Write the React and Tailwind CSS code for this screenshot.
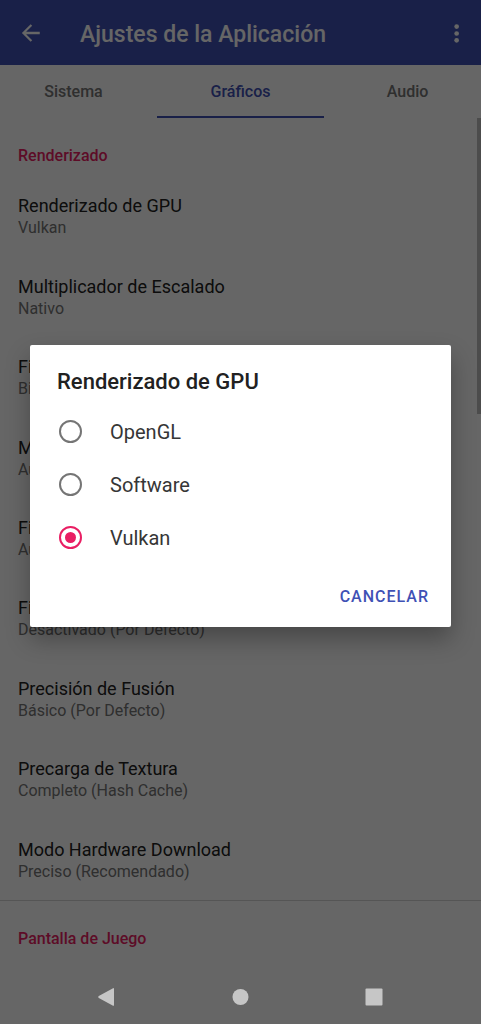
import { useState } from "react";

const TABS = ["Sistema", "Gráficos", "Audio"];

const RENDER_SETTINGS = [
  ["Renderizado de GPU", "Vulkan"],
  ["Multiplicador de Escalado", "Nativo"],
  ["Fi", "Bi"],
  ["M", "Au"],
  ["Fi", "Au"],
  ["Fi", "Desactivado (Por Defecto)"],
  ["Precisión de Fusión", "Básico (Por Defecto)"],
  ["Precarga de Textura", "Completo (Hash Cache)"],
  ["Modo Hardware Download", "Preciso (Recomendado)"],
];

const RENDERERS = ["OpenGL", "Software", "Vulkan"];

function AppBar() {
  return (
    <header className="flex h-[65px] items-center bg-[#3f51b5] pl-[17px] pr-[10px] text-white">
      <button type="button" aria-label="Atrás" className="flex size-7 items-center justify-center">
        <svg viewBox="0 0 24 24" className="size-7" fill="currentColor">
          <path d="M19.500 11H7.830l5.200-5.200L11.700 4.400l-7.500 7.600 7.500 7.600 1.330-1.400L7.830 13H19.500v-2z" />
        </svg>
      </button>
      <h1 className="ml-[35px] flex-1 pt-1 text-[23px] leading-7 font-medium">Ajustes de la Aplicación</h1>
      <button type="button" aria-label="Más opciones" className="flex size-7 items-center justify-center">
        <svg viewBox="0 0 24 24" className="size-7" fill="currentColor">
          <circle cx="11.700" cy="6.500" r="2" />
          <circle cx="11.700" cy="12.400" r="2" />
          <circle cx="11.700" cy="18.300" r="2" />
        </svg>
      </button>
    </header>
  );
}

function TabBar() {
  return (
    <nav className="overflow-hidden">
      <div className="-mx-[10px] flex">
        {TABS.map((tab) => (
          <button
            key={tab}
            type="button"
            className={
              tab === "Gráficos"
                ? "h-[53px] flex-1 border-b-2 border-[#3f51b5] pt-[2px] text-base font-medium text-[#3f51b5]"
                : "h-[53px] flex-1 border-b-2 border-transparent pt-[2px] text-base font-medium text-[#757575]"
            }
          >
            {tab}
          </button>
        ))}
      </div>
    </nav>
  );
}

function SectionTitle({ children }) {
  return <h2 className="px-[18px] pt-7 pb-[10px] text-base leading-5 font-medium text-[#e91e63]">{children}</h2>;
}

function Setting({ title, value }) {
  return (
    <li className="flex flex-1 flex-col">
      <button type="button" className="flex flex-1 flex-col justify-center px-[18px] text-left">
        <span className="text-lg leading-6 text-[#212121]">{title}</span>
        <span className="text-base leading-5 text-[#757575]">{value}</span>
      </button>
    </li>
  );
}

function RendererDialog() {
  const [selected, setSelected] = useState("Vulkan");
  return (
    <div className="flex flex-1 items-center px-[30px]">
      <div
        role="dialog"
        aria-labelledby="dialog-title"
        className="flex w-full flex-col rounded-[2px] bg-white pt-[23px] pb-[10px] shadow-[0_12px_24px_rgba(0,0,0,0.3)]"
      >
        <h2 id="dialog-title" className="px-[27px] text-[22px] leading-7 font-medium text-[#212121]">
          Renderizado de GPU
        </h2>
        <div className="mt-[9px] flex flex-col">
          {RENDERERS.map((name) => (
            <label key={name} className="flex h-[53px] items-center gap-7 pl-[29px] text-xl text-[#363636]">
              <input
                type="radio"
                name="renderer"
                checked={selected === name}
                onChange={() => setSelected(name)}
                className="size-[23px] appearance-none rounded-full border-2 border-[#757575] bg-clip-content p-1 checked:border-[#e91e63] checked:bg-[#e91e63]"
              />
              {name}
            </label>
          ))}
        </div>
        <button
          type="button"
          className="mt-[13px] mr-[10px] flex h-10 items-center self-end px-3 text-base font-medium tracking-[1px] text-[#3f51b5] uppercase"
        >
          Cancelar
        </button>
      </div>
    </div>
  );
}

function SystemNav() {
  return (
    <div className="flex h-[52px] items-center justify-center gap-[106px] pb-[2px] text-[#c6c6c6]">
      <button type="button" aria-label="Volver" className="size-7">
        <svg viewBox="0 0 28 28" className="size-7" fill="currentColor">
          <path d="M19.600 5.400Q21 4.500 21 6.200V21.800Q21 23.500 19.600 22.600L5.800 15Q4.400 14 5.800 13Z" />
        </svg>
      </button>
      <button type="button" aria-label="Inicio" className="size-7">
        <svg viewBox="0 0 28 28" className="size-7" fill="currentColor">
          <circle cx="13.500" cy="14" r="8" />
        </svg>
      </button>
      <button type="button" aria-label="Recientes" className="size-7">
        <svg viewBox="0 0 28 28" className="size-7" fill="currentColor">
          <rect x="4.500" y="5.500" width="17" height="17" rx="1" />
        </svg>
      </button>
    </div>
  );
}

export default function App() {
  return (
    <div className="relative h-screen overflow-hidden bg-white font-[Roboto,sans-serif]">
      <AppBar />
      <TabBar />
      <main className="relative">
        <SectionTitle>Renderizado</SectionTitle>
        <ul className="flex min-h-[725px] flex-col border-b border-[#d4d4d4]">
          {RENDER_SETTINGS.map(([title, value], index) => (
            <Setting key={index} title={title} value={value} />
          ))}
        </ul>
        <SectionTitle>Pantalla de Juego</SectionTitle>
        <div className="absolute top-0 right-0 h-[296px] w-1 bg-[#bdbdbd]" />
      </main>
      <div className="absolute inset-0 flex flex-col bg-black/60">
        <RendererDialog />
        <SystemNav />
      </div>
    </div>
  );
}
